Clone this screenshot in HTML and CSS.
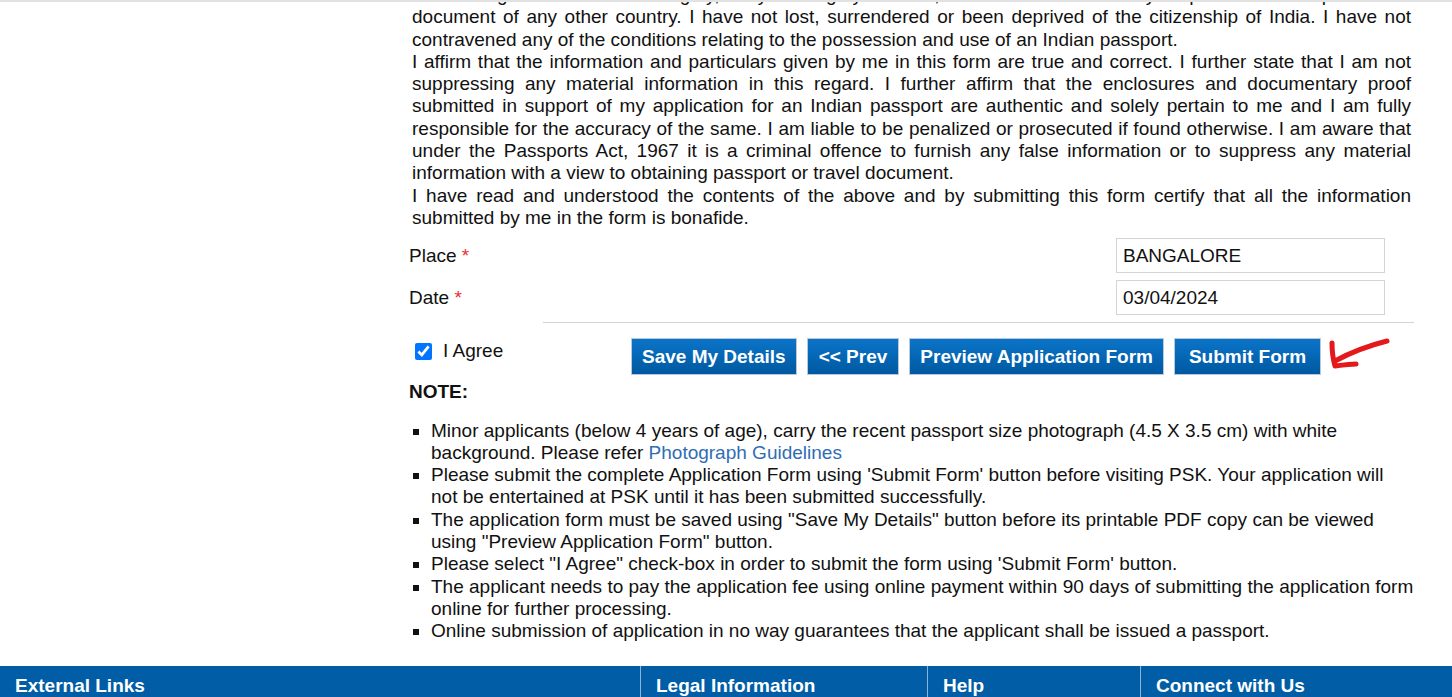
FILE: index.html
```html
<!DOCTYPE html>
<html lang="en">
<head>
    <meta charset="UTF-8">
    <title>Application Form - Declaration</title>
    <link rel="stylesheet" href="styles.css">
</head>
<body>
    <div class="topline"></div>
    <div class="page">
        <div class="sidebar"></div>
        <div class="main">
            <div class="declaration">
                <div>I owe allegiance to the sovereignty, unity &amp; integrity of India, and have not voluntarily acquired citizenship or travel document of any other country. I have not lost, surrendered or been deprived of the citizenship of India. I have not contravened any of the conditions relating to the possession and use of an Indian passport.</div>
                <div>I affirm that the information and particulars given by me in this form are true and correct. I further state that I am not suppressing any material information in this regard. I further affirm that the enclosures and documentary proof submitted in support of my application for an Indian passport are authentic and solely pertain to me and I am fully responsible for the accuracy of the same. I am liable to be penalized or prosecuted if found otherwise. I am aware that under the Passports Act, 1967 it is a criminal offence to furnish any false information or to suppress any material information with a view to obtaining passport or travel document.</div>
                <div>I have read and understood the contents of the above and by submitting this form certify that all the information submitted by me in the form is bonafide.</div>
            </div>

            <div class="form-row">
                <label for="place">Place <span class="req">*</span></label>
                <input type="text" id="place" value="BANGALORE">
            </div>
            <div class="form-row">
                <label for="date">Date <span class="req">*</span></label>
                <input type="text" id="date" value="03/04/2024">
            </div>
            <div class="divider"></div>

            <div class="action-row">
                <label class="agree"><input type="checkbox" checked> I Agree</label>
                <div class="buttons">
                    <button class="btn">Save My Details</button>
                    <button class="btn btn-prev">&lt;&lt; Prev</button>
                    <button class="btn">Preview Application Form</button>
                    <button class="btn btn-submit">Submit Form</button>
                    <svg class="arrow" width="64" height="34" viewBox="0 0 64 34">
                        <path d="M60 4 C48 7 30 12 8 24" fill="none" stroke="#e3191b" stroke-width="5" stroke-linecap="round"/>
                        <path d="M5 6 C5 14 6 22 8 29 C16 28 24 27 29 27" fill="none" stroke="#e3191b" stroke-width="5" stroke-linecap="round" stroke-linejoin="round"/>
                    </svg>
                </div>
            </div>

            <div class="note-title">NOTE:</div>
            <ul class="notes">
                <li>Minor applicants (below 4 years of age), carry the recent passport size photograph (4.5 X 3.5 cm) with white background. Please refer <a href="#">Photograph Guidelines</a></li>
                <li>Please submit the complete Application Form using 'Submit Form' button before visiting PSK. Your application will not be entertained at PSK until it has been submitted successfully.</li>
                <li>The application form must be saved using "Save My Details" button before its printable PDF copy can be viewed using "Preview Application Form" button.</li>
                <li>Please select "I Agree" check-box in order to submit the form using 'Submit Form' button.</li>
                <li>The applicant needs to pay the application fee using online payment within 90 days of submitting the application form online for further processing.</li>
                <li>Online submission of application in no way guarantees that the applicant shall be issued a passport.</li>
            </ul>
        </div>
    </div>

    <div class="footer">
        <div class="footer-col">External Links</div>
        <div class="footer-col">Legal Information</div>
        <div class="footer-col">Help</div>
        <div class="footer-col">Connect with Us</div>
    </div>
</body>
</html>
```

FILE: styles.css
```css
html {
    overflow: hidden;
}
body {
    margin: 0;
    font-family: "Liberation Sans", Arial, sans-serif;
    font-size: 19px;
    line-height: 22.3px;
    color: #111;
    background-color: white;
}
.topline {
    position: fixed;
    top: 0;
    left: 0;
    right: 0;
    height: 2px;
    background-color: #e2e2e2;
}
.page {
    display: flex;
}
.sidebar {
    width: 409px;
    flex-shrink: 0;
}
.main {
    width: 1005px;
}
.declaration {
    margin-top: -16px;
    padding: 0 3px;
    text-align: justify;
}
.form-row {
    display: flex;
    justify-content: space-between;
    align-items: center;
    margin-top: 7px;
    padding-right: 29px;
}
.declaration + .form-row {
    margin-top: 9px;
}
.form-row input {
    width: 269px;
    height: 35px;
    box-sizing: border-box;
    border: 1px solid #d4d4d4;
    padding: 0 6px;
    font-family: inherit;
    font-size: 19px;
    color: #111;
}
.req {
    color: #e8312f;
}
.divider {
    margin: 7px 0 0 134px;
    border-top: 1px solid #d2d2d2;
}
.action-row {
    display: flex;
    margin-top: 15px;
}
.agree {
    display: flex;
    align-items: center;
    gap: 11px;
    width: 216px;
    padding: 2px 0 0 6px;
    align-self: flex-start;
}
.agree input {
    width: 17px;
    height: 17px;
    margin: 0;
}
.buttons {
    display: flex;
    align-items: center;
    gap: 10px;
}
.btn {
    height: 37px;
    padding: 0 10px;
    border: 1px solid #b9c9da;
    background: linear-gradient(#0b74c8, #0059a1);
    color: white;
    font-family: inherit;
    font-size: 19px;
    font-weight: bold;
    cursor: pointer;
}
.btn-prev {
    padding: 0 11px;
}
.btn-submit {
    padding: 0 14px;
}
.arrow {
    margin-left: -4px;
    margin-top: -6px;
}
.note-title {
    margin-top: 6px;
    font-weight: bold;
}
.notes {
    margin: 16px 0 0;
    padding-left: 22px;
    list-style: square;
}
.notes a {
    color: #2f6db5;
    text-decoration: none;
}
.footer {
    display: grid;
    grid-template-columns: 640px 287px 213px 1fr;
    margin-top: 23px;
    height: 60px;
    background-color: #005da6;
    color: white;
    font-weight: bold;
}
.footer-col {
    padding: 9px 0 0 15px;
    border-left: 1px solid #8fb1d3;
}
.footer-col:first-child {
    border-left: none;
    padding-left: 15px;
}
```
